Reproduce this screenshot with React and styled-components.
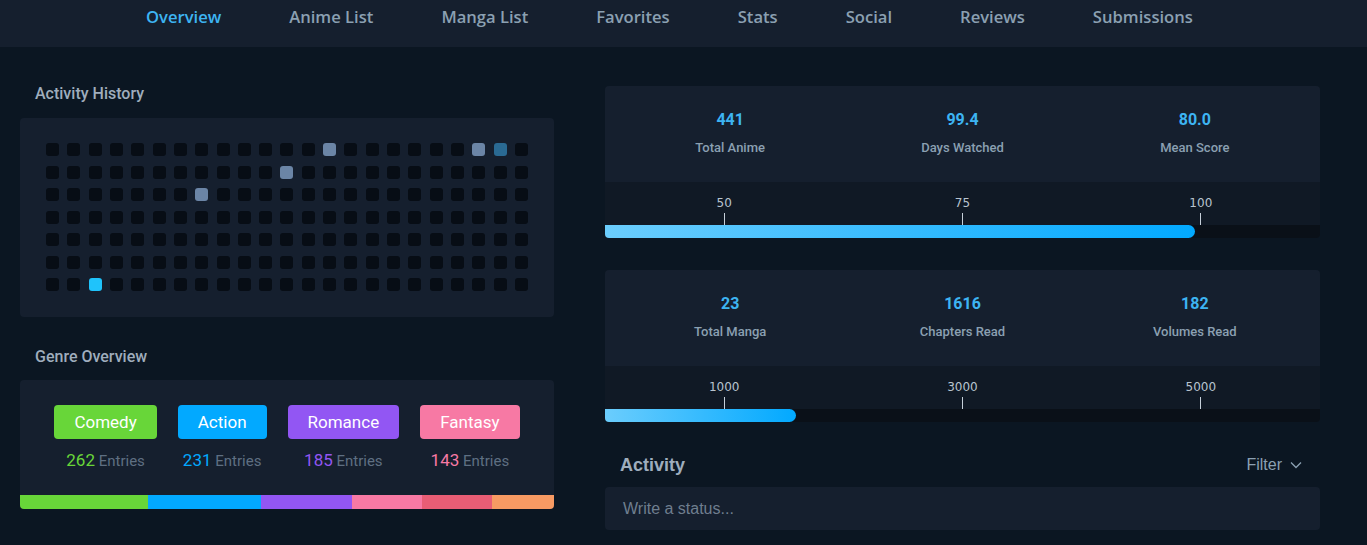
import React from "react";
import styled, { createGlobalStyle } from "styled-components";

const GlobalStyle = createGlobalStyle`
    body {
        margin: 0;
        background: #0b1622;
        font-family: Roboto, "Liberation Sans", sans-serif;
    }
`;

const navItems = ["Overview", "Anime List", "Manga List", "Favorites", "Stats", "Social", "Reviews", "Submissions"];

const activeDots = {
    "0-13": "#6b85a6",
    "0-20": "#6b85a6",
    "0-21": "#2a6a93",
    "1-11": "#6b85a6",
    "2-7": "#6b85a6",
    "6-2": "#1fc3fb",
};

const genres = [
    { name: "Comedy", count: 262, color: "#68d639" },
    { name: "Action", count: 231, color: "#02a9ff" },
    { name: "Romance", count: 185, color: "#9256f3" },
    { name: "Fantasy", count: 143, color: "#f779a4" },
];

const genreBar = [
    { color: "#68d639", width: 128 },
    { color: "#02a9ff", width: 113 },
    { color: "#9256f3", width: 91 },
    { color: "#f779a4", width: 70 },
    { color: "#e85d75", width: 70 },
    { color: "#f79a63", width: 62 },
];

const statCards = [
    {
        stats: [["441", "Total Anime"], ["99.4", "Days Watched"], ["80.0", "Mean Score"]],
        ticks: ["50", "75", "100"],
        fill: 590,
    },
    {
        stats: [["23", "Total Manga"], ["1616", "Chapters Read"], ["182", "Volumes Read"]],
        ticks: ["1000", "3000", "5000"],
        fill: 191,
    },
];

export default function App() {
    return <>
        <GlobalStyle />
        <Nav>
            {navItems.map((item, i) => (
                <NavLink key={item} $active={i === 0}>{item}</NavLink>
            ))}
        </Nav>
        <Main>
            <LeftColumn>
                <SectionTitle>Activity History</SectionTitle>
                <HistoryBox>
                    <DotGrid>
                        {Array.from({ length: 7 }).map((_, r) =>
                            Array.from({ length: 23 }).map((_, c) => (
                                <Dot key={r + "-" + c} $color={activeDots[r + "-" + c]} />
                            ))
                        )}
                    </DotGrid>
                </HistoryBox>

                <SectionTitle $top={29}>Genre Overview</SectionTitle>
                <GenreBox>
                    <GenreRow>
                        {genres.map(g => (
                            <Genre key={g.name}>
                                <GenreTag $color={g.color}>{g.name}</GenreTag>
                                <GenreCount>
                                    <CountNum $color={g.color}>{g.count}</CountNum> Entries
                                </GenreCount>
                            </Genre>
                        ))}
                    </GenreRow>
                    <GenreBar>
                        {genreBar.map((s, i) => (
                            <GenreSegment key={i} $color={s.color} style={{ width: s.width }} />
                        ))}
                    </GenreBar>
                </GenreBox>
            </LeftColumn>

            <RightColumn>
                {statCards.map((card, i) => (
                    <StatCard key={i}>
                        <StatsRow>
                            {card.stats.map(([value, label]) => (
                                <Stat key={label}>
                                    <StatValue>{value}</StatValue>
                                    <StatLabel>{label}</StatLabel>
                                </Stat>
                            ))}
                        </StatsRow>
                        <ProgressArea>
                            <Ticks>
                                {card.ticks.map(t => (
                                    <Tick key={t}>
                                        <TickLabel>{t}</TickLabel>
                                        <TickLine />
                                    </Tick>
                                ))}
                            </Ticks>
                            <Track>
                                <Fill style={{ width: card.fill }} />
                            </Track>
                        </ProgressArea>
                    </StatCard>
                ))}

                <ActivityHeader>
                    <ActivityTitle>Activity</ActivityTitle>
                    <FilterButton>
                        Filter
                        <svg width="12" height="8" viewBox="0 0 12 8" fill="none">
                            <path d="M1 1.5 L6 6.5 L11 1.5" stroke="#8ba0b2" strokeWidth="1.3" />
                        </svg>
                    </FilterButton>
                </ActivityHeader>
                <StatusInput>Write a status...</StatusInput>
            </RightColumn>
        </Main>
    </>
}

const Nav = styled.nav`
    height: 47px;
    background: #151f2e;
    display: flex;
    align-items: center;
    gap: 68px;
    padding-left: 146px;
    padding-bottom: 13px;
    box-sizing: border-box;
`;

const NavLink = styled.a`
    font-family: "Open Sans", Roboto, sans-serif;
    font-size: 16.6px;
    font-weight: 600;
    color: ${p => p.$active ? "#3db4f2" : "#8ba0b2"};
    cursor: pointer;
    line-height: 20px;
`;

const Main = styled.main`
    display: grid;
    grid-template-columns: 534px 715px;
    column-gap: 51px;
    padding: 0 20px;
`;

const LeftColumn = styled.section`
    padding-top: 36px;
    display: flex;
    flex-direction: column;
`;

const SectionTitle = styled.h3`
    margin: ${p => p.$top || 0}px 0 12px 15px;
    font-size: 16px;
    font-weight: 500;
    line-height: 22px;
    color: #9fadbd;
`;

const HistoryBox = styled.div`
    background: #151f2e;
    border-radius: 4px;
    padding: 25px 26px 26px;
    margin-top: 1px;
`;

const DotGrid = styled.div`
    display: grid;
    grid-template-columns: repeat(23, 13px);
    grid-auto-rows: 13px;
    row-gap: 9.5px;
    justify-content: space-between;
`;

const Dot = styled.div`
    border-radius: 3px;
    background: ${p => p.$color || "#070d15"};
`;

const GenreBox = styled.div`
    background: #151f2e;
    border-radius: 4px;
    overflow: hidden;
    padding-top: 25px;
`;

const GenreRow = styled.div`
    display: flex;
    justify-content: center;
    gap: 21px;
    padding-bottom: 24px;
`;

const Genre = styled.div`
    display: flex;
    flex-direction: column;
    align-items: center;
    gap: 11px;
`;

const GenreTag = styled.div`
    height: 34px;
    line-height: 34px;
    padding: 0 20px;
    border-radius: 4px;
    background: ${p => p.$color};
    color: #fff;
    font-size: 17px;
`;

const GenreCount = styled.div`
    font-size: 15px;
    line-height: 20px;
    color: #5f6f82;
`;

const CountNum = styled.span`
    font-size: 17px;
    color: ${p => p.$color};
`;

const GenreBar = styled.div`
    display: flex;
    height: 14px;
`;

const GenreSegment = styled.div`
    background: ${p => p.$color};
    flex-shrink: 0;
`;

const RightColumn = styled.section`
    padding-top: 39px;
    display: flex;
    flex-direction: column;
`;

const StatCard = styled.div`
    border-radius: 4px;
    overflow: hidden;
    margin-bottom: 32px;
    background: #101925;
`;

const StatsRow = styled.div`
    background: #151f2e;
    display: grid;
    grid-template-columns: repeat(3, 1fr);
    padding: 24px 9px 25px;
`;

const Stat = styled.div`
    display: flex;
    flex-direction: column;
    align-items: center;
    gap: 9px;
`;

const StatValue = styled.div`
    font-size: 16px;
    font-weight: 700;
    line-height: 20px;
    color: #3db4f2;
`;

const StatLabel = styled.div`
    font-size: 13px;
    line-height: 18px;
    font-weight: 500;
    color: #8ba0b2;
`;

const ProgressArea = styled.div`
    padding-top: 14px;
`;

const Ticks = styled.div`
    display: grid;
    grid-template-columns: repeat(3, 1fr);
`;

const Tick = styled.div`
    display: flex;
    flex-direction: column;
    align-items: center;
`;

const TickLabel = styled.div`
    font-family: "DejaVu Sans", sans-serif;
    font-size: 12px;
    line-height: 14px;
    color: #b8c4cf;
    margin-bottom: 3px;
`;

const TickLine = styled.div`
    width: 1px;
    height: 12px;
    background: #c6d0da;
`;

const Track = styled.div`
    height: 13px;
    background: #0a1018;
`;

const Fill = styled.div`
    height: 100%;
    border-radius: 0 7px 7px 0;
    background: linear-gradient(to right, #6bcdfd, #02a9ff);
`;

const ActivityHeader = styled.div`
    display: flex;
    align-items: center;
    justify-content: space-between;
    padding: 0 18px 0 15px;
    margin-bottom: 11px;
    height: 22px;
`;

const ActivityTitle = styled.h3`
    margin: 0;
    font-family: "Liberation Sans", Arial, sans-serif;
    font-size: 18px;
    font-weight: 700;
    color: #9fadbd;
`;

const FilterButton = styled.div`
    display: flex;
    align-items: center;
    gap: 8px;
    font-family: "Liberation Sans", Arial, sans-serif;
    font-size: 16px;
    color: #8ba0b2;
`;

const StatusInput = styled.div`
    height: 43px;
    line-height: 43px;
    padding-left: 18px;
    background: #151f2e;
    border-radius: 4px;
    font-family: "Liberation Sans", Arial, sans-serif;
    font-size: 16px;
    color: #6f7e8e;
`;
